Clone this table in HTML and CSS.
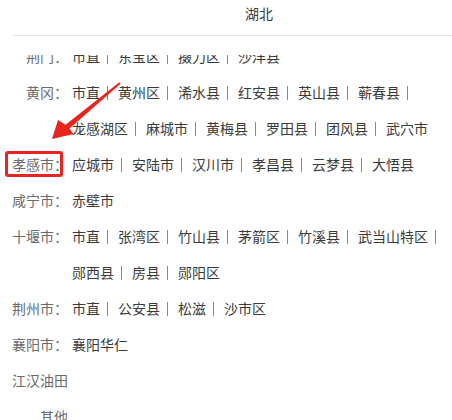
FILE: index.html
```html
<!doctype html>
<html lang="zh-CN">
 <head>
  <meta charset="UTF-8">
  <meta name="viewport" content="width=device-width, initial-scale=1.0">
  <title>湖北</title>
  <link rel="stylesheet" href="styles.css">
 </head>
 <body>
  <div class="header">
   <div class="title">湖北</div>
  </div>
  <div class="scroll">
   <div class="list">
    <div class="row">
     <div class="label">荆门：</div>
     <div class="opts"><span>市直</span><span>东宝区</span><span>掇刀区</span><span>沙洋县</span></div>
    </div>
    <div class="row">
     <div class="label">黄冈：</div>
     <div class="opts"><span>市直</span><span>黄州区</span><span>浠水县</span><span>红安县</span><span>英山县</span><span>蕲春县</span><span>龙感湖区</span><span>麻城市</span><span>黄梅县</span><span>罗田县</span><span>团风县</span><span>武穴市</span></div>
    </div>
    <div class="row">
     <div class="label">孝感市：</div>
     <div class="opts"><span>应城市</span><span>安陆市</span><span>汉川市</span><span>孝昌县</span><span>云梦县</span><span>大悟县</span></div>
    </div>
    <div class="row">
     <div class="label">咸宁市：</div>
     <div class="opts"><span>赤壁市</span></div>
    </div>
    <div class="row">
     <div class="label">十堰市：</div>
     <div class="opts"><span>市直</span><span>张湾区</span><span>竹山县</span><span>茅箭区</span><span>竹溪县</span><span>武当山特区</span><span>郧西县</span><span>房县</span><span>郧阳区</span></div>
    </div>
    <div class="row">
     <div class="label">荆州市：</div>
     <div class="opts"><span>市直</span><span>公安县</span><span>松滋</span><span>沙市区</span></div>
    </div>
    <div class="row">
     <div class="label">襄阳市：</div>
     <div class="opts"><span>襄阳华仁</span></div>
    </div>
    <div class="row">
     <div class="label">江汉油田</div>
    </div>
    <div class="row">
     <div class="label">其他</div>
    </div>
   </div>
  </div>

  <!-- annotation -->
  <div class="mark"></div>
  <svg class="arrow" width="452" height="420" viewBox="0 0 452 420">
   <polygon points="52,139 58,120 65.5,124.8 119.4,82.2 120.6,83.8 69.5,128.5 73.5,134" fill="#e8241f"/>
  </svg>
 </body>
</html>
```
FILE: styles.css
```css
body {
    margin: 0;
    background: #fff;
    font-family: "Noto Sans CJK SC", "Noto Sans", sans-serif;
    font-size: 14px;
    color: #3a3a3a;
    height: 420px;
    overflow: hidden;
    position: relative;
}

.header {
    margin-left: 12px;
    height: 35px;
    border-bottom: 1px solid #e6e6e6;
}

.title {
    padding: 4px 0 0 233px;
    line-height: 18px;
    color: #3a3a3a;
}

.scroll {
    margin-top: 19px;
    height: 365px;
    overflow: hidden;
}

.list {
    margin-top: -17px;
    padding: 0 4px 0 12px;
}

.row {
    display: flex;
    line-height: 36px;
}

.label {
    width: 56px;
    flex: none;
    text-align: right;
    color: #6a6a6a;
}

.opts {
    flex: 1;
    display: flex;
    flex-wrap: wrap;
    padding-left: 4px;
}

.opts span {
    display: flex;
    align-items: center;
}

.opts span::after {
    content: "";
    width: 1px;
    height: 14px;
    background: #888;
    margin: 1px 10px 0 7px;
}

.opts span:last-child::after {
    display: none;
}

.mark {
    position: absolute;
    left: 5px;
    top: 151px;
    width: 52px;
    height: 20px;
    border: 3px solid #e8241f;
    border-radius: 3px;
}

.arrow {
    position: absolute;
    left: 0;
    top: 0;
}
```
